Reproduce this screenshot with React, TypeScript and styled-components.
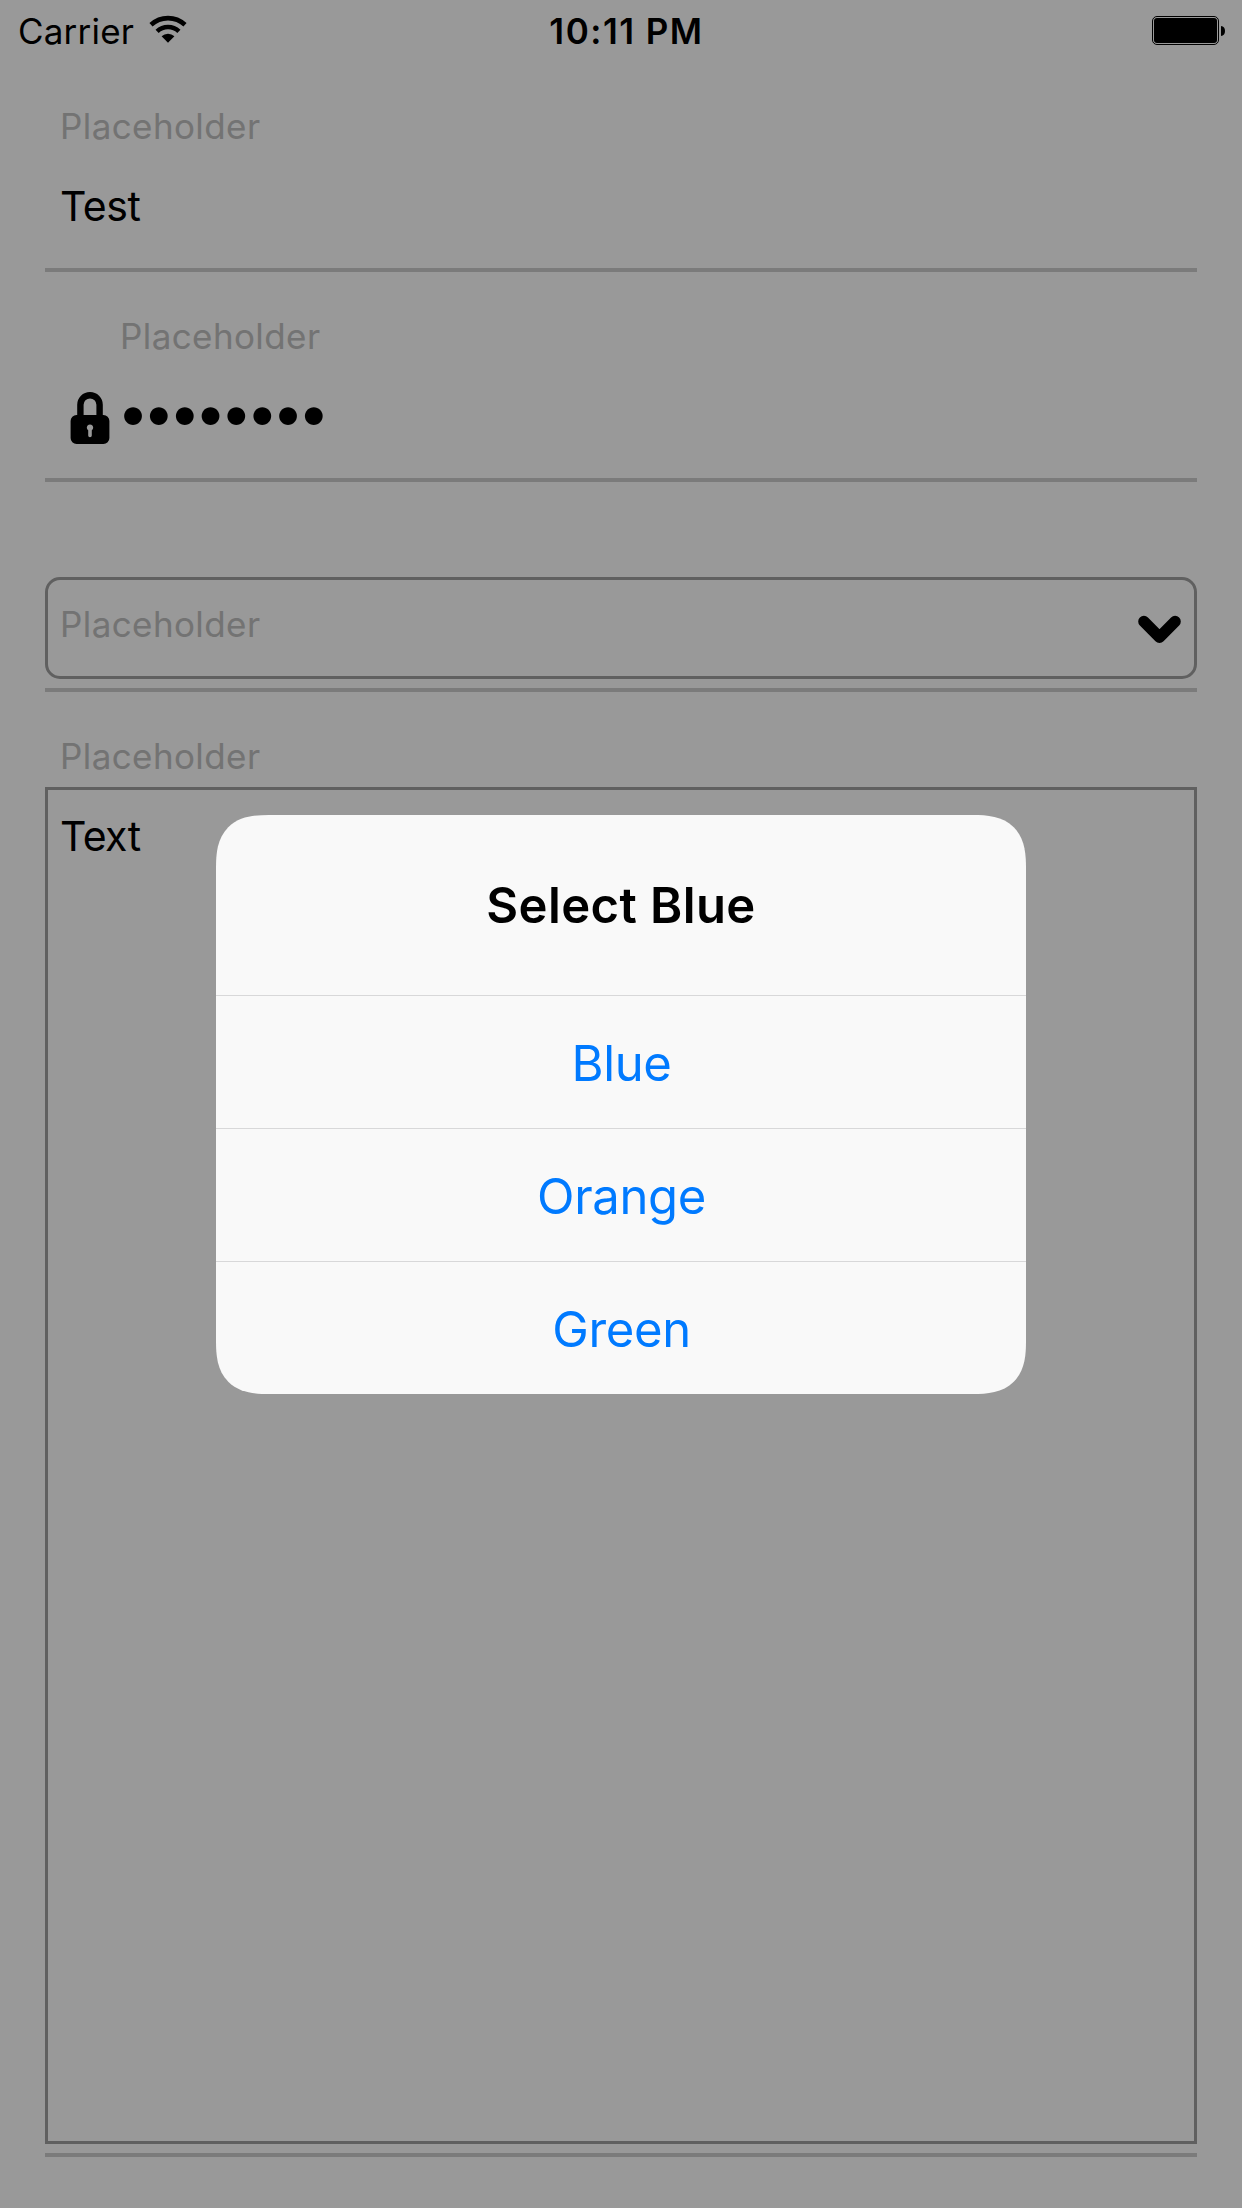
import React from "react";
import styled, { createGlobalStyle } from "styled-components";

const GlobalStyle = createGlobalStyle`
  *, *::before, *::after { box-sizing: border-box; }
  body {
    margin: 0;
    background: #fff;
    font-family: "Inter", "Liberation Sans", sans-serif;
    color: #000;
  }
`;

const Screen = styled.div`
  position: relative;
  width: 1242px;
  height: 2208px;
  overflow: hidden;
  display: flex;
  flex-direction: column;
  background: #fff;
`;

const StatusBar = styled.header`
  display: grid;
  grid-template-columns: 1fr auto 1fr;
  height: 62px;
  padding: 10px 17px 0 18px;
  font-size: 35px;
  line-height: 42px;
`;

const Carrier = styled.div`
  display: flex;
  align-items: flex-start;
  gap: 15px;
  letter-spacing: 0.2px;

  svg {
    margin-top: 5px;
  }
`;

const Clock = styled.time`
  padding-left: 10px;
  font-weight: 600;
  letter-spacing: 1.5px;
  white-space: nowrap;
`;

const BatterySlot = styled.div`
  display: flex;
  justify-content: flex-end;
  align-items: flex-start;
  padding-top: 6px;
`;

const Form = styled.main`
  flex: 1;
  display: flex;
  flex-direction: column;
  padding: 0 45px 51px;
`;

const Field = styled.section<{ $grow?: boolean; $bottom?: boolean }>`
  display: flex;
  flex-direction: column;
  justify-content: ${(p) => (p.$bottom ? "flex-end" : "flex-start")};
  flex: ${(p) => (p.$grow ? "1 1 auto" : "0 0 210px")};
  padding-top: ${(p) => (p.$bottom ? 0 : 43)}px;
  padding-bottom: ${(p) => (p.$grow || p.$bottom ? 9 : 0)}px;
  border-bottom: 4px solid #cdcdcd;
`;

const Label = styled.label<{ $indent?: number }>`
  padding-left: ${(p) => p.$indent ?? 15}px;
  font-size: 35px;
  line-height: 42px;
  letter-spacing: 0.4px;
  color: #c0c0c0;
`;

const Value = styled.div`
  margin-top: 34px;
  padding-left: 15px;
  font-size: 41px;
  line-height: 50px;
  letter-spacing: -0.4px;
`;

const PasswordRow = styled.div`
  display: flex;
  align-items: flex-start;
  margin-top: 21px;
  padding-left: 25px;

  svg {
    margin-top: 14px;
  }
`;

const Dots = styled.span`
  padding-left: 7px;
  font-size: 57px;
  line-height: 69px;
  letter-spacing: -6.23px;
`;

const SelectBox = styled.div`
  display: flex;
  justify-content: space-between;
  align-items: flex-start;
  height: 102px;
  padding: 23px 12px 0 0;
  border: 3px solid #a0a0a0;
  border-radius: 15px;

  svg {
    margin-top: 12px;
  }
`;

const TextArea = styled.div`
  flex: 1;
  margin-top: 10px;
  padding: 21px 12px;
  border: 3px solid #a0a0a0;
  font-size: 41px;
  line-height: 50px;
  letter-spacing: -0.6px;
`;

const Backdrop = styled.div`
  position: absolute;
  inset: 0;
  display: flex;
  align-items: center;
  justify-content: center;
  padding-top: 1px;
  background: rgba(0, 0, 0, 0.4);
`;

const Dialog = styled.div`
  width: 810px;
  border-radius: 41px;
  overflow: hidden;
  background: #f9f9f9;

  @supports (corner-shape: superellipse(1.4)) {
    border-radius: 53px;
    corner-shape: superellipse(1.4);
  }
`;

const DialogTitle = styled.h2`
  height: 180px;
  margin: 0;
  padding-top: 61px;
  font-size: 49px;
  font-weight: 600;
  line-height: 60px;
  letter-spacing: 0.4px;
  text-align: center;
`;

const DialogAction = styled.button`
  display: flex;
  justify-content: center;
  align-items: flex-start;
  width: 100%;
  height: 133px;
  padding: 38px 0 0 1px;
  border: 0;
  border-top: 1px solid #d8d8d9;
  background: transparent;
  font-family: inherit;
  font-size: 49px;
  line-height: 60px;
  letter-spacing: -0.35px;
  color: #007aff;
`;

const WifiIcon = () => (
  <svg width="38" height="28" viewBox="0 0 38 28">
    <g fill="none" stroke="#000" strokeWidth="4.6">
      <path d="M2 9.8A24.9 24.9 0 0 1 36 9.8" />
      <path d="M8.1 16.3A15.9 15.9 0 0 1 29.9 16.3" />
    </g>
    <path d="M12.6 21.2A9.3 9.3 0 0 1 25.4 21.2L19 27.8Z" />
  </svg>
);

const BatteryIcon = () => (
  <svg width="73" height="29" viewBox="0 0 73 29">
    <rect x="0.5" y="0.5" width="66" height="28" rx="4.5" fill="none" stroke="#000" />
    <rect x="2" y="2" width="63" height="25" rx="3" />
    <path d="M69 10C71.6 10.3 73 12 73 15S71.6 19.7 69 20Z" />
  </svg>
);

const LockIcon = () => (
  <svg width="40" height="53" viewBox="0 0 40 53">
    <path
      d="M10.4 24V12.8A9.6 9.6 0 0 1 29.6 12.8V24"
      fill="none"
      stroke="#000"
      strokeWidth="6.4"
    />
    <path
      fillRule="evenodd"
      d="M6.6 23H33.4A6 6 0 0 1 39.4 29V46A6 6 0 0 1 33.4 52H6.6A6 6 0 0 1 .6 46V29A6 6 0 0 1 6.6 23ZM18.2 38.3V43.4A1.8 1.8 0 0 0 21.8 43.4V38.3A3.2 3.2 0 1 0 18.2 38.3Z"
    />
  </svg>
);

const ChevronIcon = () => (
  <svg width="44" height="30" viewBox="0 0 44 30">
    <path
      d="M5.9 6.5L21.5 22.2L37.1 6.5"
      fill="none"
      stroke="#000"
      strokeWidth="11.4"
      strokeLinecap="round"
      strokeLinejoin="round"
    />
  </svg>
);

export default function App() {
  return (
    <Screen>
      <GlobalStyle />
      <StatusBar>
        <Carrier>
          Carrier
          <WifiIcon />
        </Carrier>
        <Clock>10:11 PM</Clock>
        <BatterySlot>
          <BatteryIcon />
        </BatterySlot>
      </StatusBar>

      <Form>
        <Field>
          <Label>Placeholder</Label>
          <Value>Test</Value>
        </Field>
        <Field>
          <Label $indent={75}>Placeholder</Label>
          <PasswordRow>
            <LockIcon />
            <Dots>••••••••</Dots>
          </PasswordRow>
        </Field>
        <Field $bottom>
          <SelectBox>
            <Label $indent={12}>Placeholder</Label>
            <ChevronIcon />
          </SelectBox>
        </Field>
        <Field $grow>
          <Label>Placeholder</Label>
          <TextArea>Text</TextArea>
        </Field>
      </Form>

      <Backdrop>
        <Dialog role="dialog">
          <DialogTitle>Select Blue</DialogTitle>
          {["Blue", "Orange", "Green"].map((color) => (
            <DialogAction key={color}>{color}</DialogAction>
          ))}
        </Dialog>
      </Backdrop>
    </Screen>
  );
}
